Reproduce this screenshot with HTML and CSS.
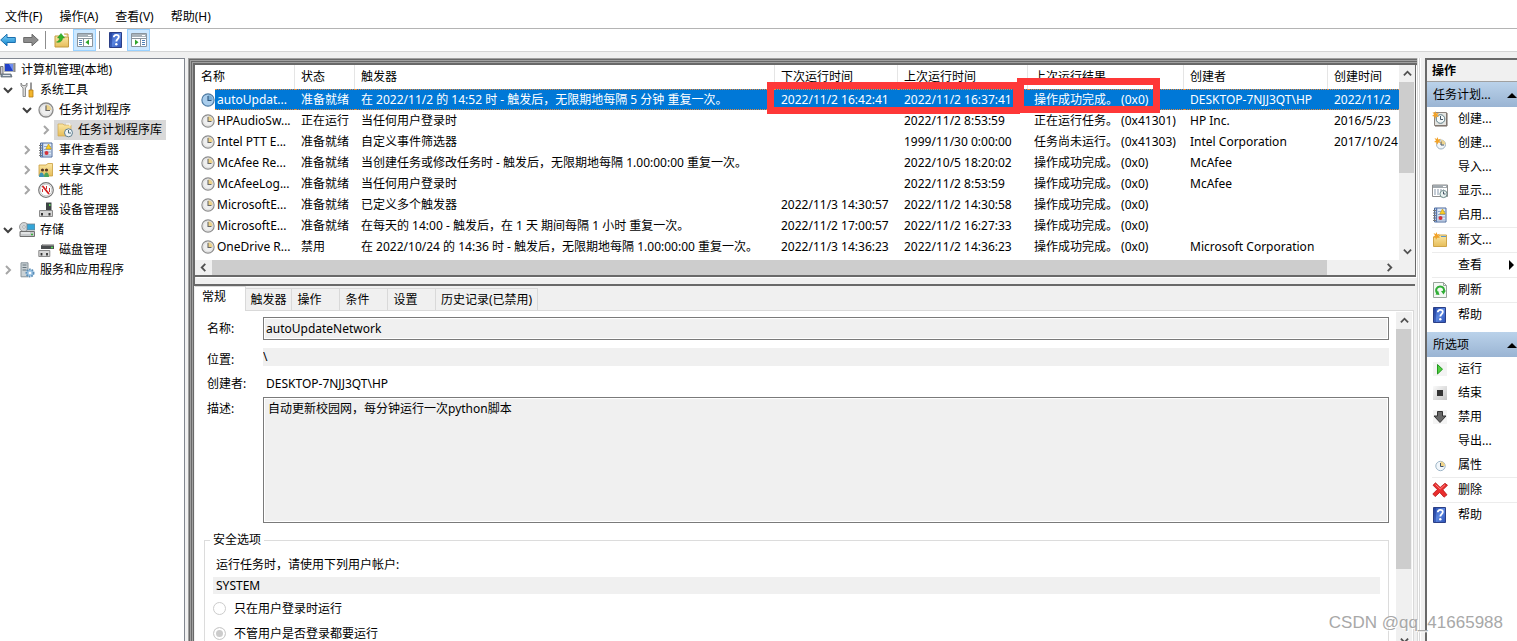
FILE: index.html
```html
<!DOCTYPE html>
<html lang="zh-CN">
<head>
<meta charset="utf-8">
<title>计算机管理</title>
<link rel="stylesheet" href="styles.css">
</head>
<body>
<svg class="sprite" aria-hidden="true">
  <defs>
    <linearGradient id="g-blue" x1="0" y1="0" x2="1" y2="1"><stop offset="0" stop-color="#2447a8"/><stop offset=".5" stop-color="#5b86e0"/><stop offset="1" stop-color="#2a4fb4"/></linearGradient>
    <linearGradient id="g-arrow" x1="0" y1="0" x2="0" y2="1"><stop offset="0" stop-color="#7fd0f5"/><stop offset="1" stop-color="#1486cf"/></linearGradient>
    <linearGradient id="g-folder" x1="0" y1="0" x2="0" y2="1"><stop offset="0" stop-color="#fbe7a4"/><stop offset="1" stop-color="#e6bd5a"/></linearGradient>
    <linearGradient id="g-stop" x1="0" y1="0" x2="1" y2="1"><stop offset="0" stop-color="#fafafa"/><stop offset="1" stop-color="#c4c4c4"/></linearGradient>
  </defs>
  <symbol id="back" viewBox="0 0 16 16"><path d="M.7 8 7 2.2v3.3h8.3v5H7v3.3z" fill="url(#g-arrow)" stroke="#1b6fae"/></symbol>
  <symbol id="fwd" viewBox="0 0 16 16"><path d="M15.3 8 9 2.2v3.3H.7v5H9v3.3z" fill="#8d8d8d" stroke="#6b6b6b"/></symbol>
  <symbol id="up" viewBox="0 0 16 16"><path d="M1 4h5l1 1h7.500v10H1z" fill="url(#g-folder)" stroke="#c39b42"/><path d="M10 2h4v3" fill="#f7e5ac" stroke="#c39b42"/><path d="M2.500 10c2-.5 3-2 3-4H3.500L7 1.500 10.500 6H8.500c0 3-2.500 5-6 4z" fill="#35b52c" stroke="#1f8a1d" stroke-width=".5"/></symbol>
  <symbol id="pane-l" viewBox="0 0 16 16"><path d="M.5 1.500h15v13H.5z" fill="#fff" stroke="#8a949c"/><path d="M1 2h14v3H1z" fill="#a9b3ba"/><path d="M11 3.500h3" stroke="#fff"/><path d="M1 6.500h14M6.500 7v7" stroke="#8a949c"/><path d="M2 8.500h3M2 10.500h3M2 12.500h3" stroke="#4e80b5"/><path d="m12 7.500v5.500L8.500 10.200z" fill="#2fa52a"/></symbol>
  <symbol id="pane-r" viewBox="0 0 16 16"><path d="M.5 1.500h15v13H.5z" fill="#fff" stroke="#8a949c"/><path d="M1 2h14v3H1z" fill="#a9b3ba"/><path d="M11 3.500h3" stroke="#fff"/><path d="M1 6.500h14M9.500 7v7" stroke="#8a949c"/><path d="M11 8.500h3M11 10.500h3M11 12.500h3" stroke="#4e80b5"/><path d="M4 7.500v5.500l3.500-2.800z" fill="#2fa52a"/></symbol>
  <symbol id="help" viewBox="0 0 16 16"><path d="M1.500.5h12v15h-12z" fill="url(#g-blue)" stroke="#2b3f86"/><path d="M3 1v14" stroke="#1f3b94"/><path d="M5.800 5.300c0-3.300 5-3.300 5-.3 0 2-2.500 2.200-2.500 4.500" fill="none" stroke="#fff" stroke-width="1.800"/><circle cx="8.300" cy="12.200" r="1.200" fill="#fff"/></symbol>
  <symbol id="pc" viewBox="0 0 16 16"><path d="M4.500 1.500h9v8h-9z" fill="#2141c8" stroke="#aab0bb"/><path d="M9 2h4v7z" fill="#6f8df0"/><path d="M14.500 1v9" stroke="#8c8c8c" stroke-width="2"/><path d="M.5 4.500H3v8H.5z" fill="#c7c7d2" stroke="#777"/><path d="M1 12h10l1 3H1z" fill="#8594a3" stroke="#56616b" stroke-width=".7"/><path d="M3 13.500h7" stroke="#dfe5ea"/></symbol>
  <symbol id="tools" viewBox="0 0 16 16"><path d="M2 1v3l2 2v8.500h2.500V6L8 4V1L6.500 3.500h-3z" fill="#d9d9d9" stroke="#777" stroke-width=".8"/><path d="M12 .5v8" stroke="#777" stroke-width="1.500"/><path d="M10 8h4v7h-4z" fill="#f3b52c" stroke="#b47b13" stroke-width=".8"/></symbol>
  <symbol id="clock" viewBox="0 0 16 16"><circle cx="8" cy="8" r="7" fill="#efefef" stroke="#8b8b8b" stroke-width="1.300"/><path d="M8 8V2.500A5.500 5.500 0 0 1 13.500 8z" fill="#edd38b"/><circle cx="8" cy="8" r="5.500" fill="none" stroke="#cfcfcf" stroke-width=".6"/><path d="M8 3.500V8.500h4" fill="none" stroke="#666" stroke-width="1.200"/></symbol>
  <symbol id="clock-sel" viewBox="0 0 16 16"><circle cx="8" cy="8" r="7" fill="#a9cdec" stroke="#4c7aa3" stroke-width="1.300"/><path d="M8 8V2.500A5.500 5.500 0 0 1 13.500 8z" fill="#7baed5"/><path d="M8 3.500V8.500h4" fill="none" stroke="#2b5278" stroke-width="1.200"/></symbol>
  <symbol id="folder-clock" viewBox="0 0 16 16"><path d="M1 2h5l1 1h7v11H1z" fill="url(#g-folder)" stroke="#d0a850" stroke-width=".7"/><path d="M9 2h4v2" stroke="#fff" fill="none"/><circle cx="11.500" cy="10.800" r="4" fill="#eef4f7" stroke="#5f7f90"/><path d="M11.500 8v3h2.500" fill="none" stroke="#4a6a7a"/></symbol>
  <symbol id="log" viewBox="0 0 16 16"><path d="M2.500 1h11.500v14H2.500z" fill="#dfe9f6" stroke="#4c6b9d"/><path d="M4.500 1v14" stroke="#5878b0" stroke-width="1.500"/><path d="M1 3.500h3M1 6h3M1 8.500h3M1 11h3M1 13.500h3" stroke="#777"/><path d="M6 4.500h7M6 7.500h7M6 10h7M6 13h7" stroke="#8fa8cb"/><path d="m10.500 2 2.700 5H7.800z" fill="#fbd02a" stroke="#c69600" stroke-width=".6"/><circle cx="8.500" cy="11" r="2" fill="#d5333a"/></symbol>
  <symbol id="share" viewBox="0 0 16 16"><path d="M1 3h7l2-1.500h4.500V14H1z" fill="url(#g-folder)" stroke="#c99d3c" stroke-width=".8"/><circle cx="4.500" cy="8" r="1.600" fill="#5b3b25"/><circle cx="8.500" cy="8" r="1.600" fill="#5b3b25"/><path d="M1 15c0-6 5-6 5 0z" fill="#3c93b5"/><path d="M6 15c0-6 5-6 5 0z" fill="#4ca35a"/></symbol>
  <symbol id="perf" viewBox="0 0 16 16"><circle cx="8" cy="8" r="7.300" fill="#fff" stroke="#777" stroke-width="1.200"/><circle cx="8" cy="8" r="5.800" fill="none" stroke="#aaa" stroke-width=".6"/><path d="m4.500 4 6.500 8" stroke="#d51f1f" stroke-width="1.800"/><path d="M4.500 7v3M8.500 4v3M11.500 6v4" stroke="#c33"/></symbol>
  <symbol id="device" viewBox="0 0 16 16"><path d="M8 .5h5.500v8H8z" fill="#3f4446"/><path d="M11 2h1.500v2H11z" fill="#5fd95f"/><path d="M1.500 8.500h13v6h-13z" fill="#d4d4d4" stroke="#8b8b8b"/><path d="M4 11v2.500M11.500 11v2.500" stroke="#333" stroke-width="2"/></symbol>
  <symbol id="storage" viewBox="0 0 16 16"><circle cx="5" cy="5" r="4.500" fill="#d2d6d8" stroke="#888" stroke-width=".8"/><circle cx="5" cy="5" r="1.300" fill="#fff" stroke="#777" stroke-width=".5"/><path d="M8 2h8v6H8z" fill="#34a5d8" stroke="#71808a" stroke-width=".8"/><path d="M1 9.500h14.500v5H1z" fill="#c6c9cb" stroke="#707070"/><path d="M2 11h9" stroke="#fff"/><path d="M12 12.500h2" stroke="#39b539" stroke-width="1.500"/></symbol>
  <symbol id="disk" viewBox="0 0 16 16"><path d="M3 3.500 5 2h11v5H3z" fill="#4a4d4f"/><path d="M5 2h11v1.500H4z" fill="#b3b3b3"/><path d="M13 5.500h2" stroke="#58e058" stroke-width="1.500"/><path d="M.8 8.500h11v6h-11z" fill="#d8d8d8" stroke="#8b8b8b"/><path d="M3.500 11v2.500M9 11v2.500" stroke="#333" stroke-width="1.800"/></symbol>
  <symbol id="service" viewBox="0 0 16 16"><path d="M2 .8h7v14H2z" fill="#c9d1d5" stroke="#87939a"/><path d="M3.500 3h4M3.500 5.500h4M3.500 8h4" stroke="#66747d"/><circle cx="11" cy="11" r="3.600" fill="#9cc4e4" stroke="#5b8fb9" stroke-width="1.800" stroke-dasharray="1.600 1"/><circle cx="11" cy="11" r="1.300" fill="#fff"/></symbol>
  <symbol id="new-task" viewBox="0 0 16 16"><path d="M2.500 1.500h12v13h-12z" fill="#e4e4e1" stroke="#8d8680"/><path d="M15 2v13H3" fill="none" stroke="#70655c"/><circle cx="8.500" cy="8" r="4.300" fill="#f4f8f8" stroke="#5e7d86"/><path d="M8.500 5v3.500H11" fill="none" stroke="#456"/><path d="m3.500 0 .8 2.500L7 1.800 5.300 4 7 6l-2.700-.4L3 8 2.400 5.400 0 5l2-1.500L.5 1l2.200 1z" fill="#f2a227"/></symbol>
  <symbol id="new-basic" viewBox="0 0 16 16"><circle cx="9" cy="9.500" r="4.500" fill="#f1f6fa" stroke="#9db0c0"/><path d="M9 9.500V5a4.500 4.500 0 0 1 4.500 4.500z" fill="#efd590"/><path d="M9 6.500v3.500h3" fill="none" stroke="#456"/><path d="m5.500 2 .8 2.500L9 3.800 7.300 6 9 8l-2.700-.4L5 10l-.6-2.600L2 7l2-1.500L2.500 3l2.200 1z" fill="#f2a227"/></symbol>
  <symbol id="running" viewBox="0 0 16 16"><path d="M.5 2h15v11.500H.5z" fill="#fff" stroke="#8d8d8d"/><path d="M1 2h14v3H1z" fill="#a2a9ae"/><path d="M11 3.500h3" stroke="#fff"/><path d="M2 7h10M2 9h6M2 11h6" stroke="#8797aa" stroke-dasharray="2 1"/><circle cx="11.500" cy="11" r="3.600" fill="#e9f2f0" stroke="#6c8b8b"/><path d="M11.500 8.500V11h2" fill="none" stroke="#456"/></symbol>
  <symbol id="new-folder" viewBox="0 0 16 16"><path d="M1.500 5h5l1-2h7v11.500h-13z" fill="url(#g-folder)" stroke="#c99d3c" stroke-width=".9"/><path d="M9 4.500h5" stroke="#5a98cf"/><path d="m4.500 0 .8 2.500L8 1.800 6.300 4 8 6l-2.700-.4L4 8l-.6-2.600L1 5l2-1.500L1.500 1l2.200 1z" fill="#f2a227"/></symbol>
  <symbol id="refresh" viewBox="0 0 16 16"><path d="M1.500.5h10l3 3v12h-13z" fill="#f5f8f5" stroke="#99a59b"/><path d="M11.500.5v3h3" fill="none" stroke="#99a59b"/><path d="M5.500 11.500C2.500 8 5 4.500 8 4.500s4.500 2 4 5" fill="none" stroke="#2fae35" stroke-width="2"/><path d="m9 9 5-.5-2.500 4z" fill="#2fae35"/><path d="M6 8.500 7.500 13l-4-.5z" fill="#2fae35"/></symbol>
  <symbol id="run" viewBox="0 0 16 16"><path d="M1 1h14v14H1z" fill="#f3f3f3"/><path d="m5.500 3.500 5 4.700-5 4.800z" fill="#4fce3f" stroke="#239820"/></symbol>
  <symbol id="end" viewBox="0 0 16 16"><path d="M1 1h14v14H1z" fill="url(#g-stop)"/><path d="M5 5h6v6H5z" fill="#333"/></symbol>
  <symbol id="disable" viewBox="0 0 16 16"><path d="M1 1h14v14H1z" fill="#f4f4f4"/><path d="M5.500 2.500h5V7H14l-6 6.500L2 7h3.500z" fill="#666" stroke="#333"/></symbol>
  <symbol id="props" viewBox="0 0 16 16"><circle cx="8.500" cy="9" r="4.700" fill="#f1f6fa" stroke="#9db5c7"/><path d="M8.500 9V4.500A4.500 4.500 0 0 1 13 9z" fill="#f1d489"/><path d="M8.500 6v3.500h3" fill="none" stroke="#456"/></symbol>
  <symbol id="delete" viewBox="0 0 16 16"><path d="m3.500.8 4.700 4.600L13 1.300l2.500 2-4.700 4.500 4.200 5-3 2.400-4.300-4.800-4.500 4.200L.8 12l4.500-4.500L1 3.200z" fill="#ea2d2d" stroke="#b51616" stroke-width=".8"/><path d="m3.500 2.500 4.700 4.500L13 2.700" fill="none" stroke="#ff8484"/></symbol>
  <symbol id="chev" viewBox="0 0 10 10"><path d="m1 3 4 4 4-4" fill="none" stroke="currentColor" stroke-width="2"/></symbol>
  <symbol id="tri" viewBox="0 0 10 10"><path d="m0 8 5-5 5 5z" fill="#000"/></symbol>
</svg>

<nav class="menubar">
  <button>文件(F)</button><button>操作(A)</button><button>查看(V)</button><button>帮助(H)</button>
</nav>
<div class="toolbar">
  <button aria-label="后退"><svg><use href="#back"/></svg></button>
  <button aria-label="前进"><svg><use href="#fwd"/></svg></button>
  <span class="divider"></span>
  <button aria-label="向上"><svg><use href="#up"/></svg></button>
  <button class="on" aria-label="控制台树"><svg><use href="#pane-l"/></svg></button>
  <span class="divider"></span>
  <button aria-label="帮助"><svg><use href="#help"/></svg></button>
  <button class="on" aria-label="操作窗格"><svg><use href="#pane-r"/></svg></button>
</div>

<main class="workspace">
  <aside class="tree">
    <ul>
      <li class="root"><span class="node"><svg><use href="#pc"/></svg>计算机管理(本地)</span></li>
      <li><svg class="exp"><use href="#chev"/></svg><span class="node"><svg><use href="#tools"/></svg>系统工具</span></li>
      <li class="l2"><svg class="exp"><use href="#chev"/></svg><span class="node"><svg><use href="#clock"/></svg>任务计划程序</span></li>
      <li class="l3"><svg class="exp closed"><use href="#chev"/></svg><span class="node current"><svg><use href="#folder-clock"/></svg>任务计划程序库</span></li>
      <li class="l2"><svg class="exp closed"><use href="#chev"/></svg><span class="node"><svg><use href="#log"/></svg>事件查看器</span></li>
      <li class="l2"><svg class="exp closed"><use href="#chev"/></svg><span class="node"><svg><use href="#share"/></svg>共享文件夹</span></li>
      <li class="l2"><svg class="exp closed"><use href="#chev"/></svg><span class="node"><svg><use href="#perf"/></svg>性能</span></li>
      <li class="l2"><span class="exp"></span><span class="node"><svg><use href="#device"/></svg>设备管理器</span></li>
      <li><svg class="exp"><use href="#chev"/></svg><span class="node"><svg><use href="#storage"/></svg>存储</span></li>
      <li class="l2"><span class="exp"></span><span class="node"><svg><use href="#disk"/></svg>磁盘管理</span></li>
      <li><svg class="exp closed"><use href="#chev"/></svg><span class="node"><svg><use href="#service"/></svg>服务和应用程序</span></li>
    </ul>
  </aside>

  <section class="center">
    <div class="list">
      <div class="list-view">
        <table>
          <colgroup><col class="c-name"><col class="c-state"><col><col class="c-next"><col class="c-last"><col class="c-result"><col class="c-author"><col class="c-created"></colgroup>
          <thead><tr><th>名称</th><th>状态</th><th>触发器</th><th>下次运行时间</th><th>上次运行时间</th><th>上次运行结果</th><th>创建者</th><th>创建时间</th></tr></thead>
          <tbody>
            <tr class="selected"><td><div class="name"><svg><use href="#clock-sel"/></svg><span>autoUpdat...</span></div></td><td>准备就绪</td><td>在 2022/11/2 的 14:52 时 - 触发后，无限期地每隔 5 分钟 重复一次。</td><td>2022/11/2 16:42:41</td><td>2022/11/2 16:37:41</td><td>操作成功完成。 (0x0)</td><td>DESKTOP-7NJJ3QT\HP</td><td>2022/11/2</td></tr>
            <tr><td><div class="name"><svg><use href="#clock"/></svg><span>HPAudioSw...</span></div></td><td>正在运行</td><td>当任何用户登录时</td><td></td><td>2022/11/2 8:53:59</td><td>正在运行任务。 (0x41301)</td><td>HP Inc.</td><td>2016/5/23</td></tr>
            <tr><td><div class="name"><svg><use href="#clock"/></svg><span>Intel PTT E...</span></div></td><td>准备就绪</td><td>自定义事件筛选器</td><td></td><td>1999/11/30 0:00:00</td><td>任务尚未运行。 (0x41303)</td><td>Intel Corporation</td><td>2017/10/24</td></tr>
            <tr><td><div class="name"><svg><use href="#clock"/></svg><span>McAfee Re...</span></div></td><td>准备就绪</td><td>当创建任务或修改任务时 - 触发后，无限期地每隔 1.00:00:00 重复一次。</td><td></td><td>2022/10/5 18:20:02</td><td>操作成功完成。 (0x0)</td><td>McAfee</td><td></td></tr>
            <tr><td><div class="name"><svg><use href="#clock"/></svg><span>McAfeeLog...</span></div></td><td>准备就绪</td><td>当任何用户登录时</td><td></td><td>2022/11/2 8:53:59</td><td>操作成功完成。 (0x0)</td><td>McAfee</td><td></td></tr>
            <tr><td><div class="name"><svg><use href="#clock"/></svg><span>MicrosoftE...</span></div></td><td>准备就绪</td><td>已定义多个触发器</td><td>2022/11/3 14:30:57</td><td>2022/11/2 14:30:58</td><td>操作成功完成。 (0x0)</td><td></td><td></td></tr>
            <tr><td><div class="name"><svg><use href="#clock"/></svg><span>MicrosoftE...</span></div></td><td>准备就绪</td><td>在每天的 14:00 - 触发后，在 1 天 期间每隔 1 小时 重复一次。</td><td>2022/11/2 17:00:57</td><td>2022/11/2 16:27:33</td><td>操作成功完成。 (0x0)</td><td></td><td></td></tr>
            <tr><td><div class="name"><svg><use href="#clock"/></svg><span>OneDrive R...</span></div></td><td>禁用</td><td>在 2022/10/24 的 14:36 时 - 触发后，无限期地每隔 1.00:00:00 重复一次。</td><td>2022/11/3 14:36:23</td><td>2022/11/2 14:36:23</td><td>操作成功完成。 (0x0)</td><td>Microsoft Corporation</td><td></td></tr>
          </tbody>
        </table>
        <div class="vbar"><button class="a-up" aria-label="向上滚动"><svg><use href="#chev"/></svg></button><span class="thumb"></span><button class="a-down" aria-label="向下滚动"><svg><use href="#chev"/></svg></button></div>
      </div>
      <div class="hbar"><button class="a-left" aria-label="向左滚动"><svg><use href="#chev"/></svg></button><span class="track"><span class="thumb"></span></span><button class="a-right" aria-label="向右滚动"><svg><use href="#chev"/></svg></button></div>
      <span class="mark mark-times"></span>
      <span class="mark mark-result"></span>
    </div>

    <div class="details">
      <div class="tabs" role="tablist">
        <button role="tab" aria-selected="true">常规</button><button role="tab">触发器</button><button role="tab" class="mid">操作</button><button role="tab" class="mid">条件</button><button role="tab" class="mid">设置</button><button role="tab" class="wide">历史记录(已禁用)</button>
      </div>
      <div class="page">
        <form class="general">
          <div class="field"><label for="name">名称:</label><input id="name" class="boxed" value="autoUpdateNetwork" readonly></div>
          <div class="field location"><label for="loc">位置:</label><input id="loc" class="flat" value="\" readonly></div>
          <div class="field author"><span class="label">创建者:</span><span>DESKTOP-7NJJ3QT\HP</span></div>
          <div class="field"><label for="desc">描述:</label><textarea id="desc" readonly>自动更新校园网，每分钟运行一次python脚本</textarea></div>
          <fieldset>
            <legend>安全选项</legend>
            <label class="acct-label" for="acct">运行任务时，请使用下列用户帐户:</label>
            <input id="acct" class="flat acct" value="SYSTEM" readonly>
            <label class="radio"><input type="radio" name="logon">只在用户登录时运行</label>
            <label class="radio"><input type="radio" name="logon" checked>不管用户是否登录都要运行</label>
          </fieldset>
        </form>
        <div class="vbar"><button class="a-up" aria-label="向上滚动"><svg><use href="#chev"/></svg></button><span class="thumb"></span><button class="a-down" aria-label="向下滚动"><svg><use href="#chev"/></svg></button></div>
      </div>
    </div>
  </section>

  <aside class="actions">
    <h2>操作</h2>
    <h3>任务计划...<svg><use href="#tri"/></svg></h3>
    <ul>
      <li><button><svg><use href="#new-task"/></svg>创建...</button></li>
      <li><button><svg><use href="#new-basic"/></svg>创建...</button></li>
      <li><button><svg></svg>导入...</button></li>
      <li><button><svg><use href="#running"/></svg>显示...</button></li>
      <li><button><svg><use href="#log"/></svg>启用...</button></li>
      <li class="sep"><button><svg><use href="#new-folder"/></svg>新文...</button></li>
      <li class="sep"><button><svg></svg>查看<svg class="more"><use href="#tri"/></svg></button></li>
      <li class="sep"><button><svg><use href="#refresh"/></svg>刷新</button></li>
      <li class="sep"><button><svg><use href="#help"/></svg>帮助</button></li>
    </ul>
    <h3>所选项<svg><use href="#tri"/></svg></h3>
    <ul>
      <li><button><svg><use href="#run"/></svg>运行</button></li>
      <li><button><svg><use href="#end"/></svg>结束</button></li>
      <li><button><svg><use href="#disable"/></svg>禁用</button></li>
      <li><button><svg></svg>导出...</button></li>
      <li><button><svg><use href="#props"/></svg>属性</button></li>
      <li class="sep"><button><svg><use href="#delete"/></svg>删除</button></li>
      <li class="sep"><button><svg><use href="#help"/></svg>帮助</button></li>
    </ul>
  </aside>
</main>
<span class="watermark">CSDN @qq_41665988</span>
</body>
</html>
```

FILE: styles.css
```css
* { box-sizing: border-box; }
body {
  margin: 0;
  height: 100vh;
  display: flex;
  flex-direction: column;
  overflow: hidden;
  background: #f0f0f0;
  color: #000;
  font: 12px/20px "Noto Sans", "Noto Sans CJK SC", sans-serif;
}
button, input, textarea { font: inherit; color: inherit; border: 0; padding: 0; margin: 0; background: none; border-radius: 0; }
ul { list-style: none; margin: 0; padding: 0; }
svg { flex: none; width: 16px; height: 16px; }
.sprite { position: absolute; width: 0; height: 0; }

.menubar { display: flex; gap: 17px; height: 29px; flex: none; padding: 5px 5px 0; background: #fff; border-bottom: 1px solid #b4b4b4; }
.toolbar { display: flex; align-items: center; height: 23px; flex: none; background: #fff; border-bottom: 1px solid #d5d5d5; }
.toolbar button { display: flex; align-items: center; justify-content: center; width: 23px; height: 22px; }
.toolbar button:first-child { width: 16px; margin-right: 3px; }
.toolbar button.on { background: #cce8ff; border: 1px solid #99d1ff; }
.toolbar .divider { width: 1px; height: 18px; margin: 0 4px 0 3px; background: #8d8d8d; }

.workspace { flex: 1; min-height: 0; display: grid; grid-template-columns: 185px minmax(0, 1fr) 92px; column-gap: 3px; padding-top: 6px; }

.tree { background: #fff; border-top: 1px solid #828790; border-right: 1px solid #828790; padding-top: 1px; white-space: nowrap; overflow: hidden; }
.tree li { display: flex; align-items: center; height: 20px; }
.tree .l2 { padding-left: 19px; }
.tree .l3 { padding-left: 38px; }
.exp { width: 10px; height: 10px; margin: 0 3px; color: #404040; }
.exp.closed { transform: rotate(-90deg); color: #a6a6a6; }
.node { display: flex; align-items: center; gap: 5px; height: 20px; padding: 0 4px 0 3px; }
.root .node { padding-left: 0; }
.node.current { background: #d9d9d9; }

.center {
  display: flex;
  flex-direction: column;
  min-height: 0;
  margin-right: 4px;
  padding: 7px 2px 0 7px;
  box-shadow: inset 1px 1px #a0a0a0, inset 2px 2px #696969, inset 3px 3px #a0a0a0, inset 4px 4px #696969, inset 5px 5px #a0a0a0, inset 7px 7px #696969, 1px 0 #fff, 2px 0 #d9d9d9, 3px 0 #fff;
  border-right: 1px solid #d9d9d9;
}
.list { position: relative; border-right: 1px solid #696969; border-bottom: 2px solid #696969; background: #fff; margin-right: -1px; box-shadow: 1px 1px #fff; }
.list-view { display: flex; }
table { flex: 1; width: 0; table-layout: fixed; border-spacing: 0; margin-bottom: 3px; }
.c-name { width: 100px; }
.c-state { width: 60px; }
.c-next { width: 123px; }
.c-last { width: 130px; }
.c-result { width: 156px; }
.c-author { width: 144px; }
.c-created { width: 71px; }
th, td { padding: 0 0 0 6px; white-space: nowrap; overflow: hidden; text-align: left; font-weight: 400; }
th { height: 24px; line-height: 22px; border-right: 1px solid #e5e5e5; }
th:last-child { border-right: 0; }
td { height: 21px; line-height: 19px; border: 1px solid transparent; border-width: 1px 0; }
td:first-child { padding: 0; border: 0; }
.name { display: flex; align-items: center; padding-left: 6px; }
.name svg { width: 14px; height: 14px; }
.name span { flex: 1; padding-left: 2px; border: 1px solid transparent; border-width: 1px 0; }
.selected { color: #fff; }
.selected td:not(:first-child), .selected .name span { background: #0078d7; border-color: #e58a3c; border-style: dotted; }

.vbar { display: flex; flex-direction: column; width: 16px; flex: none; background: #f0f0f0; }
.vbar button, .hbar button { display: flex; align-items: center; justify-content: center; width: 16px; height: 17px; flex: none; color: #505050; }
.vbar button svg, .hbar button svg { width: 9px; height: 9px; }
.a-up svg { transform: rotate(180deg); }
.a-left svg { transform: rotate(90deg); }
.a-right svg { transform: rotate(-90deg); }
.thumb { display: block; background: #cdcdcd; }
.vbar .thumb { width: 15px; height: 91px; }
.vbar .a-down { margin-top: auto; }
.hbar { display: flex; height: 15px; padding-right: 17px; background: #f0f0f0; }
.hbar button { height: 15px; width: 17px; }
.hbar .track { flex: 1; padding-right: 54px; }
.hbar .thumb { height: 100%; }

.mark { position: absolute; border: 7px solid #fe3838; }
.mark-times { top: 17px; right: 395px; width: 253px; height: 32px; }
.mark-result { top: 13px; right: 255px; width: 143px; height: 35px; }

.details { flex: 1; min-height: 0; display: flex; flex-direction: column; margin: 7px 0 0 -1px; border-top: 2px solid #696969; padding: 0 1px; background: #f0f0f0; }
.tabs { display: flex; align-items: flex-end; flex: none; height: 25px; border-bottom: 1px solid #d9d9d9; }
.tabs button { width: 46px; height: 22px; border: 1px solid #d9d9d9; border-width: 1px 1px 0 0; }
.tabs .mid { width: 48px; padding-right: 12px; }
.tabs .wide { width: 102px; }
.tabs button[aria-selected] { width: 51px; height: 25px; margin-bottom: -1px; padding: 0 12px 4px 0; background: #fff; }
.page { flex: 1; min-height: 0; display: flex; background: #fff; border-right: 1px solid #d9d9d9; padding: 1px 1px 0 0; }
.page .thumb { height: 240px; }
.page .a-down { margin-bottom: -8px; }
.general { flex: 1; min-width: 0; padding: 5px 7px 0 9px; overflow: hidden; }
.field { display: flex; margin-bottom: 8px; }
.field label, .label { width: 59px; flex: none; padding-left: 3px; }
.field input, .field textarea { flex: 1; min-width: 0; }
.boxed { height: 23px; padding: 0 2px; }
.boxed, textarea { border: 1px solid #7a7a7a; background: #f0f0f0; box-shadow: inset 0 0 0 1px #fff; }
.flat { height: 18px; background: #f0f0f0; }
.field > label { padding-top: 2px; }
.location { margin-bottom: 4px; }
.author { margin-bottom: 3px; gap: 3px; }
textarea { height: 126px; padding: 1px 4px; resize: none; }
fieldset { margin: 0; padding: 4px 8px 40px; border: 1px solid #dcdcdc; }
legend { padding: 0 3px; margin-left: -3px; line-height: 18px; }
.acct-label { display: block; padding-left: 3px; line-height: 24px; }
.acct { display: block; width: 100%; padding-left: 3px; height: 17px; }
.radio { display: flex; align-items: center; gap: 8px; height: 25px; padding-top: 4px; }
.radio input { appearance: none; width: 13px; height: 13px; flex: none; border: 1px solid #ccc; border-radius: 50%; background: #fff; }
.radio input:checked { background: #ccc; box-shadow: inset 0 0 0 2px #fff; }

.actions { background: #fff; border-left: 2px solid #696969; border-top: 2px solid #696969; overflow: hidden; }
.actions h2 { margin: 0; height: 22px; padding-left: 5px; font-size: 12px; line-height: 22px; background: #f0f0f0; border-bottom: 1px solid #a0a0a0; }
.actions h3 { display: flex; align-items: center; justify-content: space-between; margin: 0; height: 25px; padding-left: 6px; font-size: 12px; font-weight: 400; white-space: nowrap; background: linear-gradient(#bad2ea, #9ab4d3); }
.actions h3 svg { width: 10px; height: 10px; }
.actions ul { padding-bottom: 5px; }
.actions .sep { border-top: 1px solid #ececec; margin-left: 5px; }
.actions .sep button { padding-left: 0; }
.actions li button { display: flex; align-items: center; width: 100%; height: 24px; padding-left: 5px; gap: 10px; text-align: left; }
.actions .more { width: 10px; height: 10px; margin-left: auto; transform: rotate(90deg); }

.watermark { position: absolute; right: 14px; bottom: 6px; color: #a8a8a8; font: 17px/24px "Liberation Sans", sans-serif; text-shadow: 1px 1px #fff; }
```
